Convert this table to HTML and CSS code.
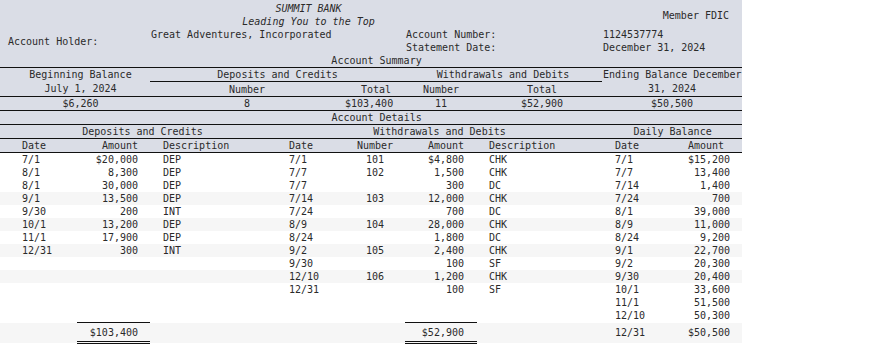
FILE: index.html
```html
<!DOCTYPE html>
<html lang="en">
<head>
  <meta charset="UTF-8" />
  <meta name="viewport" content="width=device-width, initial-scale=1.0"/>
  <title>Summit Bank Statement</title>
  <link rel="stylesheet" href="styles.css">
</head>
<body>
  <div class="statement">
    <div class="banner">
      <table class="head">
        <colgroup>
          <col style="width:150px"><col style="width:255px"><col style="width:197px"><col style="width:140px">
        </colgroup>
        <tr>
          <td colspan="3" class="bank">SUMMIT BANK</td>
          <td rowspan="2" class="fdic">Member FDIC</td>
        </tr>
        <tr>
          <td colspan="3" class="bank">Leading You to the Top</td>
        </tr>
        <tr>
          <td rowspan="2" class="holder">Account Holder:</td>
          <td>Great Adventures, Incorporated</td>
          <td>Account Number:</td>
          <td>1124537774</td>
        </tr>
        <tr>
          <td></td>
          <td>Statement Date:</td>
          <td>December 31, 2024</td>
        </tr>
        <tr class="rule">
          <td colspan="4" class="section">Account Summary</td>
        </tr>
      </table>

      <table class="summary">
        <colgroup>
          <col style="width:150px"><col style="width:194px"><col style="width:56px"><col style="width:82px"><col style="width:120px"><col style="width:140px">
        </colgroup>
        <tr>
          <td rowspan="2" class="balance begin">Beginning Balance<br>July 1, 2024</td>
          <td colspan="2" class="group dep">Deposits and Credits</td>
          <td colspan="2" class="group wd">Withdrawals and Debits</td>
          <td rowspan="2" class="balance">Ending Balance December<br>31, 2024</td>
        </tr>
        <tr class="rule">
          <td class="c">Number</td>
          <td class="r">Total</td>
          <td class="c">Number</td>
          <td class="c">Total</td>
        </tr>
        <tr class="rule">
          <td class="c begin">$6,260</td>
          <td class="c">8</td>
          <td class="r">$103,400</td>
          <td class="c">11</td>
          <td class="c">$52,900</td>
          <td class="c">$50,500</td>
        </tr>
      </table>
    </div>

    <table class="details">
      <colgroup>
        <col style="width:77px"><col style="width:73px"><col style="width:125px">
        <col style="width:70px"><col style="width:60px"><col style="width:72px"><col style="width:123px">
        <col style="width:85px"><col style="width:57px">
      </colgroup>
      <tr class="rule grey">
        <td colspan="9" class="section">Account Details</td>
      </tr>
      <tr class="rule grey">
        <td colspan="3" class="c dep-g">Deposits and Credits</td>
        <td colspan="4" class="c wd-g">Withdrawals and Debits</td>
        <td colspan="2" class="c day-g">Daily Balance</td>
      </tr>
      <tr class="rule grey">
        <td class="d1">Date</td><td class="a1">Amount</td><td class="t1">Description</td>
        <td class="d2">Date</td><td class="c n2">Number</td><td class="a2">Amount</td><td class="t2">Description</td>
        <td class="d3">Date</td><td class="a3 ah">Amount</td>
      </tr>
      <tr>
        <td class="d1">7/1</td><td class="a1">$20,000</td><td class="t1">DEP</td>
        <td class="d2">7/1</td><td class="c">101</td><td class="a2">$4,800</td><td class="t2">CHK</td>
        <td class="d3">7/1</td><td class="a3">$15,200</td>
      </tr>
      <tr>
        <td class="d1">8/1</td><td class="a1">8,300</td><td class="t1">DEP</td>
        <td class="d2">7/7</td><td class="c">102</td><td class="a2">1,500</td><td class="t2">CHK</td>
        <td class="d3">7/7</td><td class="a3">13,400</td>
      </tr>
      <tr>
        <td class="d1">8/1</td><td class="a1">30,000</td><td class="t1">DEP</td>
        <td class="d2">7/7</td><td class="c"></td><td class="a2">300</td><td class="t2">DC</td>
        <td class="d3">7/14</td><td class="a3">1,400</td>
      </tr>
      <tr class="band">
        <td class="d1">9/1</td><td class="a1">13,500</td><td class="t1">DEP</td>
        <td class="d2">7/14</td><td class="c">103</td><td class="a2">12,000</td><td class="t2">CHK</td>
        <td class="d3">7/24</td><td class="a3">700</td>
      </tr>
      <tr>
        <td class="d1">9/30</td><td class="a1">200</td><td class="t1">INT</td>
        <td class="d2">7/24</td><td class="c"></td><td class="a2">700</td><td class="t2">DC</td>
        <td class="d3">8/1</td><td class="a3">39,000</td>
      </tr>
      <tr class="band">
        <td class="d1">10/1</td><td class="a1">13,200</td><td class="t1">DEP</td>
        <td class="d2">8/9</td><td class="c">104</td><td class="a2">28,000</td><td class="t2">CHK</td>
        <td class="d3">8/9</td><td class="a3">11,000</td>
      </tr>
      <tr>
        <td class="d1">11/1</td><td class="a1">17,900</td><td class="t1">DEP</td>
        <td class="d2">8/24</td><td class="c"></td><td class="a2">1,800</td><td class="t2">DC</td>
        <td class="d3">8/24</td><td class="a3">9,200</td>
      </tr>
      <tr class="band">
        <td class="d1">12/31</td><td class="a1">300</td><td class="t1">INT</td>
        <td class="d2">9/2</td><td class="c">105</td><td class="a2">2,400</td><td class="t2">CHK</td>
        <td class="d3">9/1</td><td class="a3">22,700</td>
      </tr>
      <tr>
        <td class="d1"></td><td class="a1"></td><td class="t1"></td>
        <td class="d2">9/30</td><td class="c"></td><td class="a2">100</td><td class="t2">SF</td>
        <td class="d3">9/2</td><td class="a3">20,300</td>
      </tr>
      <tr class="band">
        <td class="d1"></td><td class="a1"></td><td class="t1"></td>
        <td class="d2">12/10</td><td class="c">106</td><td class="a2">1,200</td><td class="t2">CHK</td>
        <td class="d3">9/30</td><td class="a3">20,400</td>
      </tr>
      <tr>
        <td class="d1"></td><td class="a1"></td><td class="t1"></td>
        <td class="d2">12/31</td><td class="c"></td><td class="a2">100</td><td class="t2">SF</td>
        <td class="d3">10/1</td><td class="a3">33,600</td>
      </tr>
      <tr>
        <td colspan="7"></td>
        <td class="d3">11/1</td><td class="a3">51,500</td>
      </tr>
      <tr>
        <td colspan="7"></td>
        <td class="d3">12/10</td><td class="a3">50,300</td>
      </tr>
      <tr class="total">
        <td></td><td class="a1 sum">$103,400</td><td></td>
        <td></td><td></td><td class="a2 sum">$52,900</td><td></td>
        <td class="d3">12/31</td><td class="a3">$50,500</td>
      </tr>
    </table>
  </div>
</body>
</html>
```

FILE: styles.css
```css
body {
  margin: 0;
  background: #fff;
  color: #2a2a2a;
  font-family: "DejaVu Sans Mono", "Liberation Mono", monospace;
  font-size: 10px;
}
.statement {
  width: 742px;
}
table {
  border-collapse: collapse;
  table-layout: fixed;
  width: 742px;
}
td {
  padding: 0 1px;
  height: 13px;
  line-height: 13px;
  white-space: nowrap;
  vertical-align: middle;
}
.rule td {
  border-bottom: 1px solid #111;
}

/* Шапка */
.banner {
  background: #dadde6;
  padding-top: 2px;
}
.bank {
  font-style: italic;
  text-align: center;
  padding-left: 16px;
}
.fdic {
  text-align: right;
  padding-right: 13px;
}
.holder {
  padding-left: 8px;
}
.section {
  text-align: center;
  padding-left: 12px;
}

/* Сводка */
.summary td {
  height: 13px;
}
.balance {
  text-align: center;
  line-height: 14px;
  border-bottom: 1px solid #111;
}
.begin {
  padding-left: 12px;
}
.group {
  text-align: center;
  border-bottom: 1px solid #111;
}
.group.dep {
  padding-left: 6px;
}
.group.wd {
  padding-left: 5px;
}
.c {
  text-align: center;
}
.r {
  text-align: right;
  padding-right: 9px;
}

/* Детали */
.grey td {
  background: #dadde6;
}
.dep-g {
  padding-left: 11px;
}
.wd-g {
  padding-left: 5px;
}
.day-g {
  padding-left: 4px;
}
.d1 { padding-left: 22px; }
.a1 { text-align: right; padding-right: 12px; }
.t1 { padding-left: 13px; }
.d2 { padding-left: 14px; }
.a2 { text-align: right; padding-right: 13px; }
.t2 { padding-left: 12px; }
.d3 { padding-left: 15px; }
.a3 { text-align: right; padding-right: 12px; }
.a3.ah { padding-right: 18px; }
.band td {
  background: #f6f6f6;
}
.total td {
  background: #f6f6f6;
  height: 18px;
}
.total .sum {
  border-top: 1px solid #111;
  border-bottom: 3px double #111;
}
```
